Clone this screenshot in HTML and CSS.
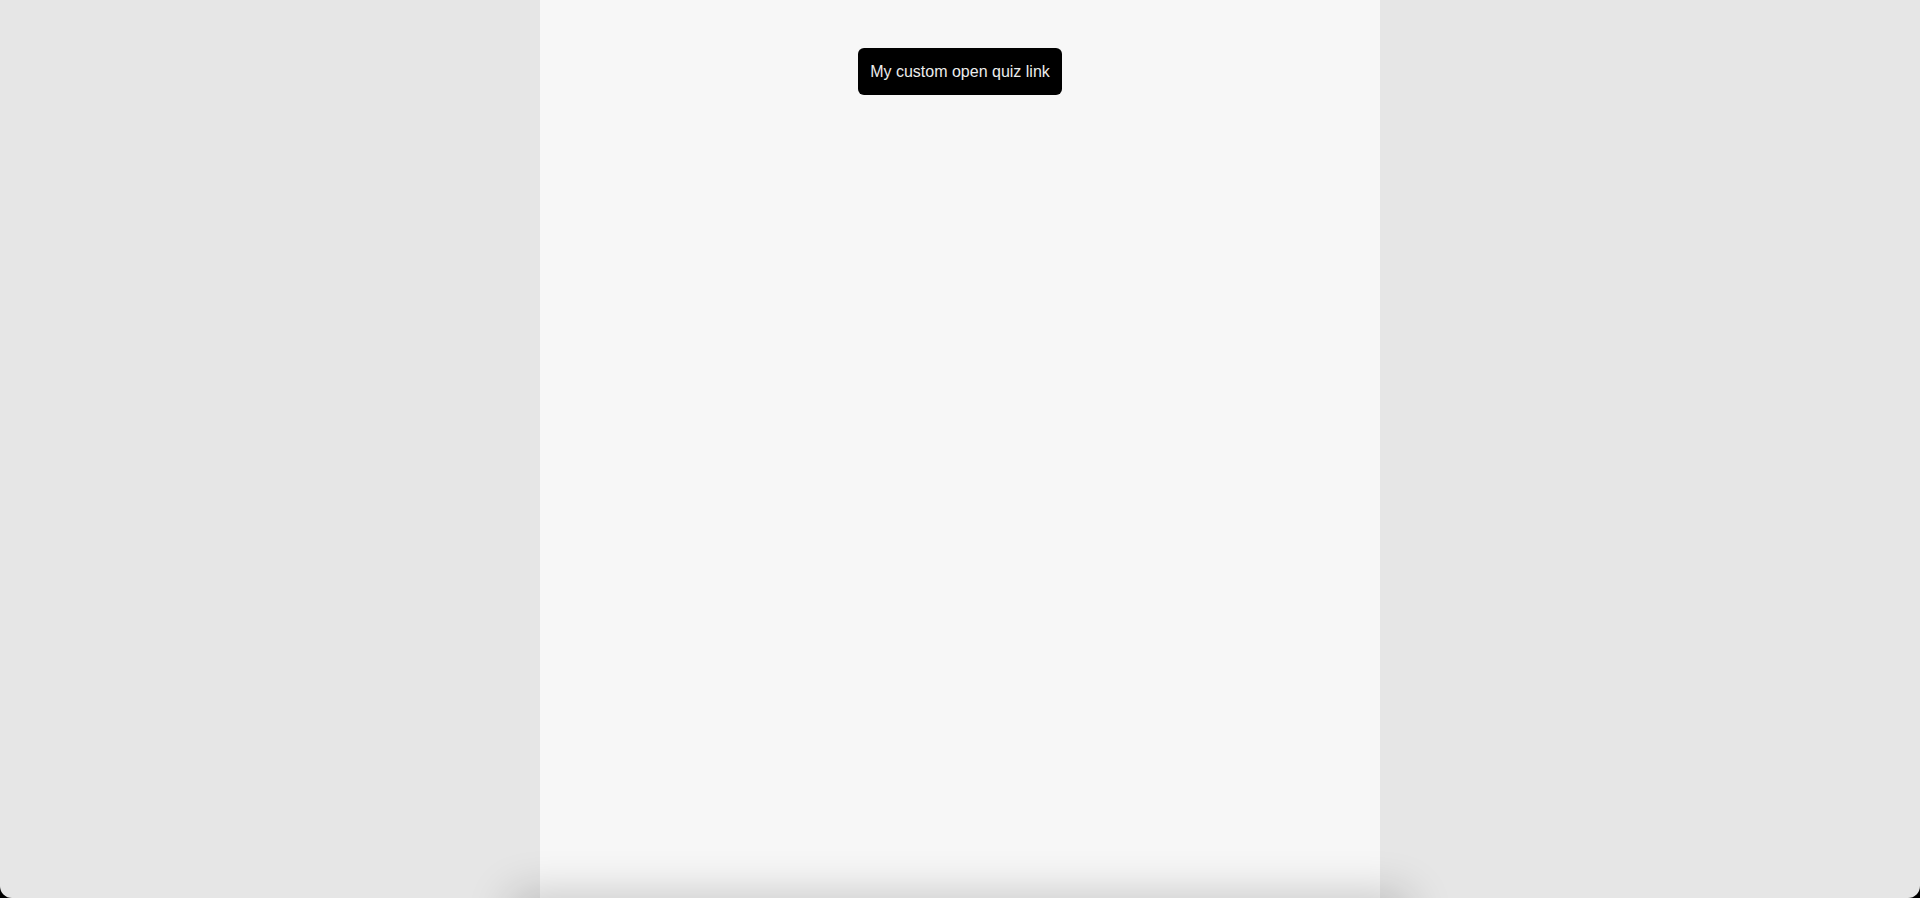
FILE: index.html
```html
<!DOCTYPE html>
<html lang="en">
<head>
<meta charset="utf-8">
<title>Quiz</title>
<link rel="stylesheet" href="styles.css">
</head>
<body>
<div class="frame">
  <main class="column">
    <a class="quiz-link" href="#">My custom open quiz link</a>
  </main>
  <div class="bottom-shade"></div>
</div>
</body>
</html>
```
FILE: styles.css
```css
html, body {
  margin: 0;
  padding: 0;
  background: #000;
  height: 100%;
  overflow: hidden;
}
.frame {
  position: relative;
  height: 898px;
  background: #e6e6e6;
  border-radius: 0 0 12px 12px;
  overflow: hidden;
  display: flex;
  justify-content: center;
}
.column {
  width: 840px;
  height: 100%;
  background: #f7f7f7;
  display: flex;
  flex-direction: column;
  align-items: center;
  padding-top: 48px;
  box-sizing: border-box;
}
.quiz-link {
  display: flex;
  align-items: center;
  justify-content: center;
  width: 204px;
  height: 47px;
  box-sizing: border-box;
  background: #000;
  color: #ececec;
  border-radius: 6px;
  font-family: "Liberation Sans", Arial, sans-serif;
  font-size: 16px;
  text-decoration: none;
  white-space: nowrap;
}
.bottom-shade {
  position: absolute;
  left: 515px;
  width: 890px;
  bottom: -40px;
  height: 40px;
  box-shadow: 0 0 45px 4px rgba(0, 0, 0, 0.2);
}
```
